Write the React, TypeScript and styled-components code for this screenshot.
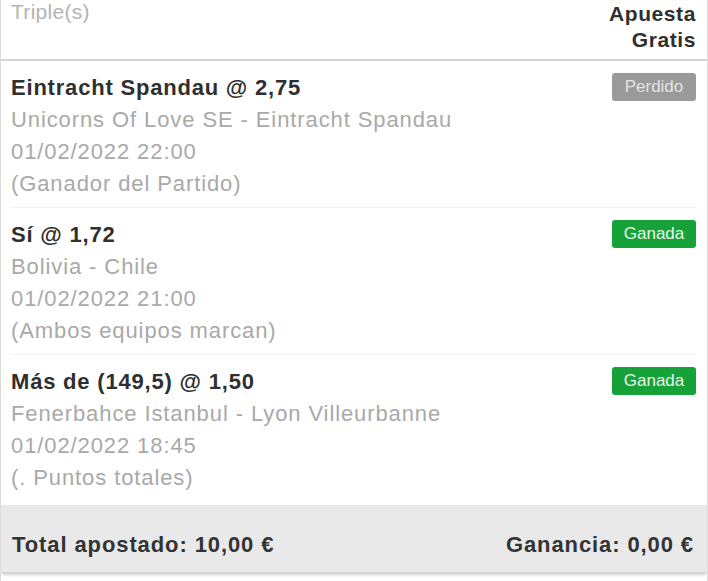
import { createGlobalStyle } from 'styled-components';
import styled from 'styled-components';

type Outcome = 'lost' | 'won';

interface Selection {
	id: number;
	pick: string;
	match: string;
	date: string;
	market: string;
	outcome: Outcome;
}

const selections: Selection[] = [
	{
		id: 1,
		pick: 'Eintracht Spandau @ 2,75',
		match: 'Unicorns Of Love SE - Eintracht Spandau',
		date: '01/02/2022 22:00',
		market: '(Ganador del Partido)',
		outcome: 'lost'
	},
	{
		id: 2,
		pick: 'Sí @ 1,72',
		match: 'Bolivia - Chile',
		date: '01/02/2022 21:00',
		market: '(Ambos equipos marcan)',
		outcome: 'won'
	},
	{
		id: 3,
		pick: 'Más de (149,5) @ 1,50',
		match: 'Fenerbahce Istanbul - Lyon Villeurbanne',
		date: '01/02/2022 18:45',
		market: '(. Puntos totales)',
		outcome: 'won'
	}
];

const GlobalStyle = createGlobalStyle`
	html, body {
		margin: 0;
		padding: 0;
		background: #ffffff;
	}
	body {
		font-family: 'Liberation Sans', Arial, Helvetica, sans-serif;
	}
`;

const Card = styled.div`
	width: 708px;
	height: 581px;
	box-sizing: border-box;
	border-left: 1px solid #dcdcdc;
	border-right: 1px solid #dcdcdc;
	background: #ffffff;
	display: flex;
	flex-direction: column;
	overflow: hidden;
`;

const Header = styled.div`
	display: flex;
	justify-content: space-between;
	align-items: flex-start;
	padding: 1px 11px 6px 10px;
	border-bottom: 2px solid #d4d4d4;
	height: 52px;
`;

const BetType = styled.span`
	color: #b4b4b4;
	font-size: 21px;
	line-height: 22px;
	letter-spacing: 0.3px;
`;

const BonusLabel = styled.span`
	color: #2f2f2f;
	font-size: 21px;
	font-weight: bold;
	line-height: 26px;
	letter-spacing: 0.6px;
	text-align: right;
`;

const List = styled.div`
	display: flex;
	flex-direction: column;
	padding: 0 11px 0 10px;
`;

const Item = styled.div<{ $last?: boolean }>`
	display: flex;
	justify-content: space-between;
	align-items: flex-start;
	padding: 11px 0 7px;
	border-bottom: ${p => (p.$last ? 'none' : '1px dotted #e4e4e4')};
`;

const Details = styled.div`
	display: flex;
	flex-direction: column;
`;

const Pick = styled.span`
	color: #2f2f2f;
	font-size: 22px;
	font-weight: bold;
	line-height: 32px;
	letter-spacing: 0.8px;
`;

const Info = styled.span`
	color: #a9a9a9;
	font-size: 22px;
	line-height: 32px;
	letter-spacing: 0.9px;
`;

const Badge = styled.span<{ $outcome: Outcome }>`
	margin-top: 1px;
	width: 84px;
	height: 28px;
	box-sizing: border-box;
	border-radius: 3px;
	display: flex;
	align-items: center;
	justify-content: center;
	font-size: 17px;
	color: ${p => (p.$outcome === 'won' ? '#e9f7ea' : '#e4e4e4')};
	background: ${p => (p.$outcome === 'won' ? '#16a238' : '#9a9a9a')};
`;

const Footer = styled.div`
	margin-top: auto;
	margin-bottom: 9px;
	height: 67px;
	background: #e9e9e9;
	border-radius: 0 0 3px 3px;
	box-shadow: 0 3px 3px rgba(0, 0, 0, 0.18);
	display: flex;
	justify-content: space-between;
	align-items: center;
	padding: 12px 13px 0 11px;
	box-sizing: border-box;
`;

const Total = styled.span`
	color: #333333;
	font-size: 22px;
	font-weight: bold;
	letter-spacing: 0.9px;
`;

const App = () => {
	return (
		<>
			<GlobalStyle />
			<Card>
				<Header>
					<BetType>Triple(s)</BetType>
					<BonusLabel>
						Apuesta
						<br />
						Gratis
					</BonusLabel>
				</Header>
				<List>
					{selections.map((s, i) => (
						<Item key={s.id} $last={i === selections.length - 1}>
							<Details>
								<Pick>{s.pick}</Pick>
								<Info>{s.match}</Info>
								<Info>{s.date}</Info>
								<Info>{s.market}</Info>
							</Details>
							<Badge $outcome={s.outcome}>
								{s.outcome === 'won' ? 'Ganada' : 'Perdido'}
							</Badge>
						</Item>
					))}
				</List>
				<Footer>
					<Total>Total apostado: 10,00 €</Total>
					<Total>Ganancia: 0,00 €</Total>
				</Footer>
			</Card>
		</>
	);
};

export default App;
